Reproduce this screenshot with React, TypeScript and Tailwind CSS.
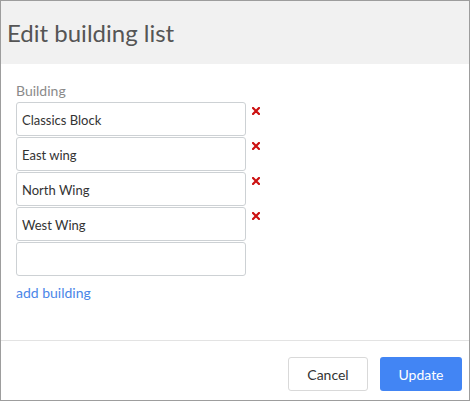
import { useState } from 'react';

const initial = ['Classics Block', 'East wing', 'North Wing', 'West Wing'];

function RemoveIcon() {
  return (
    <svg width="8" height="8" viewBox="0 0 8 8" className="block">
      <path d="M1 1 L7 7 M7 1 L1 7" stroke="#cc1111" strokeWidth="2.2" strokeLinecap="square" />
    </svg>
  );
}

export default function App() {
  const [buildings, setBuildings] = useState<string[]>(initial);

  return (
    <div className="w-[470px] h-[401px] border border-[#9d9d9d] bg-white flex flex-col font-['Lato',sans-serif] overflow-hidden">
      {/* Header */}
      <div className="h-[63px] bg-[#f1f1f1] flex items-center px-[6px] shrink-0">
        <h1 className="text-[24px] text-[#555] leading-none">Edit building list</h1>
      </div>

      {/* Body */}
      <div className="flex-1 pt-[17px] px-[15px]">
        <div className="text-[14px] leading-5 text-[#8a8a8a] mb-[1px]">Building</div>
        {[...buildings, ''].map((b, i) => (
          <div key={i} className="flex items-start mb-[1px]">
            <input
              value={b}
              onChange={(e) => {
                const next = [...buildings];
                if (i < buildings.length) next[i] = e.target.value;
                else next.push(e.target.value);
                setBuildings(next);
              }}
              className="w-[230px] h-[34px] border border-[#cdd1d4] rounded-[3px] px-[5px] pt-[1px] text-[13px] text-[#333] outline-none"
            />
            {i < buildings.length && (
              <button
                className="ml-[6px] mt-[5px]"
                onClick={() => setBuildings(buildings.filter((_, j) => j !== i))}
              >
                <RemoveIcon />
              </button>
            )}
          </div>
        ))}
        <a className="block mt-[7px] text-[14px] leading-5 text-[#4a86e8] cursor-pointer">add building</a>
      </div>

      {/* Footer */}
      <div className="border-t border-[#e3e3e3] h-[60px] flex items-start justify-end gap-[12px] pt-[16px] pr-[7px] shrink-0">
        <button className="w-[80px] h-[34px] border border-[#d9d9d9] rounded-[3px] bg-white text-[14px] text-[#333]">
          Cancel
        </button>
        <button className="w-[82px] h-[34px] rounded-[3px] bg-[#4285f4] text-[14px] text-white">
          Update
        </button>
      </div>
    </div>
  );
}
